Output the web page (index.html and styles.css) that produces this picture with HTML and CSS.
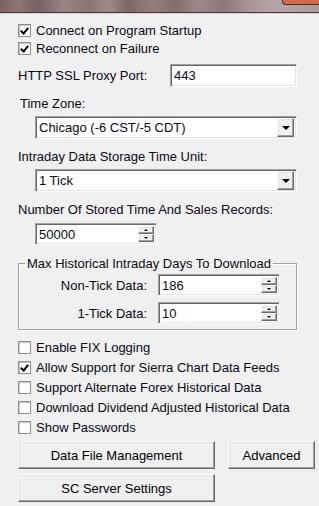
FILE: index.html
```html
<!DOCTYPE html>
<html lang="en">
<head>
  <meta charset="UTF-8" />
  <meta name="viewport" content="width=device-width, initial-scale=1" />
  <title>Data/Trade Service Settings</title>
  <link rel="stylesheet" href="styles.css">
</head>
<body>
  <div class="titlebar">
    <span class="close-btn"></span>
  </div>

  <div class="dialog">
    <label class="check first">
      <span class="box checked"></span>Connect on Program Startup
    </label>
    <label class="check">
      <span class="box checked"></span>Reconnect on Failure
    </label>

    <div class="proxy-row">
      <span>HTTP SSL Proxy Port:</span>
      <div class="field proxy">443</div>
    </div>

    <div class="caption tz-caption">Time Zone:</div>
    <div class="field combo">
      <span>Chicago (-6 CST/-5 CDT)</span>
      <span class="combo-btn"></span>
    </div>

    <div class="caption">Intraday Data Storage Time Unit:</div>
    <div class="field combo">
      <span>1 Tick</span>
      <span class="combo-btn"></span>
    </div>

    <div class="caption">Number Of Stored Time And Sales Records:</div>
    <div class="field spin records">
      <span>50000</span>
      <span class="spin-btns"><i class="up"></i><i class="down"></i></span>
    </div>

    <fieldset class="group">
      <legend>Max Historical Intraday Days To Download</legend>
      <div class="group-row">
        <span class="group-label">Non-Tick Data:</span>
        <div class="field spin days">
          <span>186</span>
          <span class="spin-btns"><i class="up"></i><i class="down"></i></span>
        </div>
      </div>
      <div class="group-row">
        <span class="group-label">1-Tick Data:</span>
        <div class="field spin days">
          <span>10</span>
          <span class="spin-btns"><i class="up"></i><i class="down"></i></span>
        </div>
      </div>
    </fieldset>

    <div class="options">
      <label class="check wide"><span class="box"></span>Enable FIX Logging</label>
      <label class="check wide"><span class="box checked"></span>Allow Support for Sierra Chart Data Feeds</label>
      <label class="check wide"><span class="box"></span>Support Alternate Forex Historical Data</label>
      <label class="check wide"><span class="box"></span>Download Dividend Adjusted Historical Data</label>
      <label class="check wide"><span class="box"></span>Show Passwords</label>
    </div>

    <div class="buttons">
      <button class="btn main-btn">Data File Management</button>
      <button class="btn adv-btn">Advanced</button>
    </div>
    <div class="buttons second">
      <button class="btn main-btn">SC Server Settings</button>
    </div>
  </div>
</body>
</html>
```

FILE: styles.css
```css
body {
  margin: 0;
  width: 319px;
  height: 506px;
  overflow: hidden;
  background: #f0f0f0;
  font-family: "Liberation Sans", Arial, sans-serif;
  font-size: 13px;
  color: #0a0a14;
}
.titlebar {
  position: relative;
  height: 12px;
  background: linear-gradient(to right, #7a6262 0%, #8f7676 6%, #746060 12%, #9a8686 20%, #8a7474 28%, #a08a8a 34%, #7d6767 40%, #957f7f 48%, #826c6c 55%, #9d8989 62%, #8b7777 70%, #a89696 78%, #b4a4a4 86%, #aa9a9a 100%);
  border-bottom: 1px solid #4a3c3c;
  box-shadow: 0 1px 0 #d8d0d0;
}
.close-btn {
  position: absolute;
  right: 0;
  top: 0;
  width: 36px;
  height: 4px;
  background: #cf6a4e;
  border-left: 1px solid #5a2a20;
  border-bottom: 1px solid #5a2a20;
  border-bottom-left-radius: 4px;
}
.dialog {
  padding: 0 0 0 18px;
}
.check {
  display: flex;
  align-items: center;
  height: 18px;
  white-space: nowrap;
}
.check.first {
  margin-top: 8px;
}
.check.wide {
  height: 20px;
}
.box {
  position: relative;
  box-sizing: border-box;
  width: 13px;
  height: 13px;
  margin-right: 5px;
  background: #fff;
  border: 1px solid #8e8f8f;
  box-shadow: inset 1px 1px 0 #c8c8c8;
  flex-shrink: 0;
}
.box.checked::after {
  content: "";
  position: absolute;
  left: 3px;
  top: 1px;
  width: 3px;
  height: 6px;
  border-right: 2px solid #000;
  border-bottom: 2px solid #000;
  transform: rotate(40deg);
}
.field {
  box-sizing: border-box;
  background: #fff;
  border-top: 1px solid #a0a0a0;
  border-left: 1px solid #a0a0a0;
  border-right: 1px solid #fff;
  border-bottom: 1px solid #fff;
  box-shadow: inset 1px 1px 0 #696969, inset -1px -1px 0 #e3e3e3;
  display: flex;
  align-items: center;
  padding-left: 3px;
}
.proxy-row {
  display: flex;
  align-items: center;
  justify-content: space-between;
  width: 279px;
  margin-top: 7px;
}
.field.proxy {
  width: 127px;
  height: 23px;
}
.caption {
  margin-top: 10px;
  height: 16px;
  line-height: 16px;
}
.tz-caption {
  margin-top: 9px;
  padding-left: 2px;
}
.combo {
  margin: 4px 0 0 17px;
  width: 262px;
  height: 23px;
  justify-content: space-between;
  padding-right: 2px;
}
.combo-btn,
.spin-btns i {
  box-sizing: border-box;
  display: flex;
  align-items: center;
  justify-content: center;
  background: #f0f0f0;
  border-top: 1px solid #fff;
  border-left: 1px solid #fff;
  border-right: 1px solid #696969;
  border-bottom: 1px solid #696969;
  box-shadow: inset -1px -1px 0 #a0a0a0, inset 1px 1px 0 #e3e3e3;
}
.combo-btn {
  width: 17px;
  height: 19px;
}
.combo-btn::after {
  content: "";
  border-left: 4px solid transparent;
  border-right: 4px solid transparent;
  border-top: 4px solid #000;
}
.spin {
  justify-content: space-between;
  padding-right: 2px;
  height: 22px;
}
.records {
  margin: 5px 0 0 17px;
  width: 122px;
}
.spin-btns {
  display: flex;
  flex-direction: column;
  align-self: stretch;
  padding: 2px 0;
}
.spin-btns i {
  width: 16px;
  flex: 1;
}
.spin-btns .up::after,
.spin-btns .down::after {
  content: "";
  border-left: 2px solid transparent;
  border-right: 2px solid transparent;
}
.spin-btns .up::after {
  border-bottom: 2px solid #000;
}
.spin-btns .down::after {
  border-top: 2px solid #000;
}
.group {
  box-sizing: border-box;
  width: 279px;
  margin: 11px 0 0 0;
  padding: 3px 0 5px 0;
  border: 1px solid #a0a0a0;
  box-shadow: 1px 1px 0 #fff, inset 1px 1px 0 #fff;
  min-width: 0;
}
.group legend {
  padding: 0 2px;
  margin-left: 6px;
  height: 15px;
  line-height: 15px;
}
.group-row {
  display: flex;
  align-items: center;
  margin-top: 6px;
}
.group-row:first-of-type {
  margin-top: 0;
}
.group-label {
  width: 128px;
  text-align: right;
  margin-right: 11px;
}
.days {
  width: 122px;
}
.options {
  margin-top: 7px;
}
.buttons {
  display: flex;
  gap: 13px;
  margin-top: 4px;
}
.buttons.second {
  margin-top: 5px;
}
.btn {
  box-sizing: border-box;
  height: 28px;
  font-family: "Liberation Sans", Arial, sans-serif;
  font-size: 13px;
  color: #000;
  background: #f0f0f0;
  border-top: 1px solid #fff;
  border-left: 1px solid #fff;
  border-right: 1px solid #696969;
  border-bottom: 1px solid #696969;
  box-shadow: inset -1px -1px 0 #a0a0a0, inset 1px 1px 0 #e3e3e3;
  padding: 0;
}
.main-btn {
  width: 197px;
}
.adv-btn {
  width: 87px;
}
```
